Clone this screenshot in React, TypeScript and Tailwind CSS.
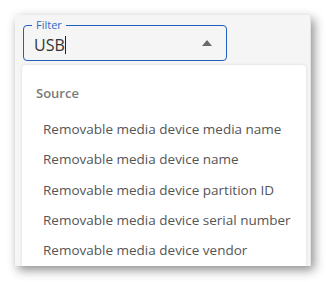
import React from "react";

const items = [
  "Removable media device media name",
  "Removable media device name",
  "Removable media device partition ID",
  "Removable media device serial number",
  "Removable media device vendor",
];

export default function App() {
  return (
    <div
      className="w-[326px] h-[282px] bg-white pt-[15px] pl-[15px] overflow-hidden"
      style={{ fontFamily: '"Open Sans", "Liberation Sans", sans-serif' }}
    >
      <div className="relative w-[296px] h-[251px] bg-[#f5f5f5] shadow-[3px_4px_10px_rgba(0,0,0,0.45)] overflow-hidden flex flex-col border-r border-[#e4e4e4]">
        <div className="pl-[8px] pt-[10px]">
          <div className="relative w-[204px] h-[36px] border border-[#1f5fbf] rounded-[4px] flex items-center pl-[10px] pr-[14px]">
            <span className="absolute -top-[9px] left-[8px] px-[4px] bg-[#f5f5f5] text-[11px] leading-[16px] text-[#2f6bc6]">
              Filter
            </span>
            <span className="text-[16px] leading-[20px] text-[#333] mt-[4px]">USB</span>
            <span className="w-[1px] h-[18px] bg-[#222] mt-[4px]" />
            <svg className="ml-auto" width="10" height="6" viewBox="0 0 10 6">
              <path d="M0 6 L5 0 L10 6 Z" fill="#6b6b6b" />
            </svg>
          </div>
        </div>
        <div className="ml-[7px] mt-[4px] w-[284px] flex-1 bg-white rounded-t-[4px] shadow-[0_0_3px_rgba(0,0,0,0.12)]">
          <div className="pl-[14px] pt-[19px] text-[13px] leading-[18px] font-semibold text-[#7a7a7a]">
            Source
          </div>
          <div className="pt-[18px] flex flex-col gap-[12.25px]">
            {items.map((t) => (
              <div key={t} className="pl-[21px] text-[13.5px] leading-[18px] text-[#555]">
                {t}
              </div>
            ))}
          </div>
        </div>
      </div>
    </div>
  );
}
